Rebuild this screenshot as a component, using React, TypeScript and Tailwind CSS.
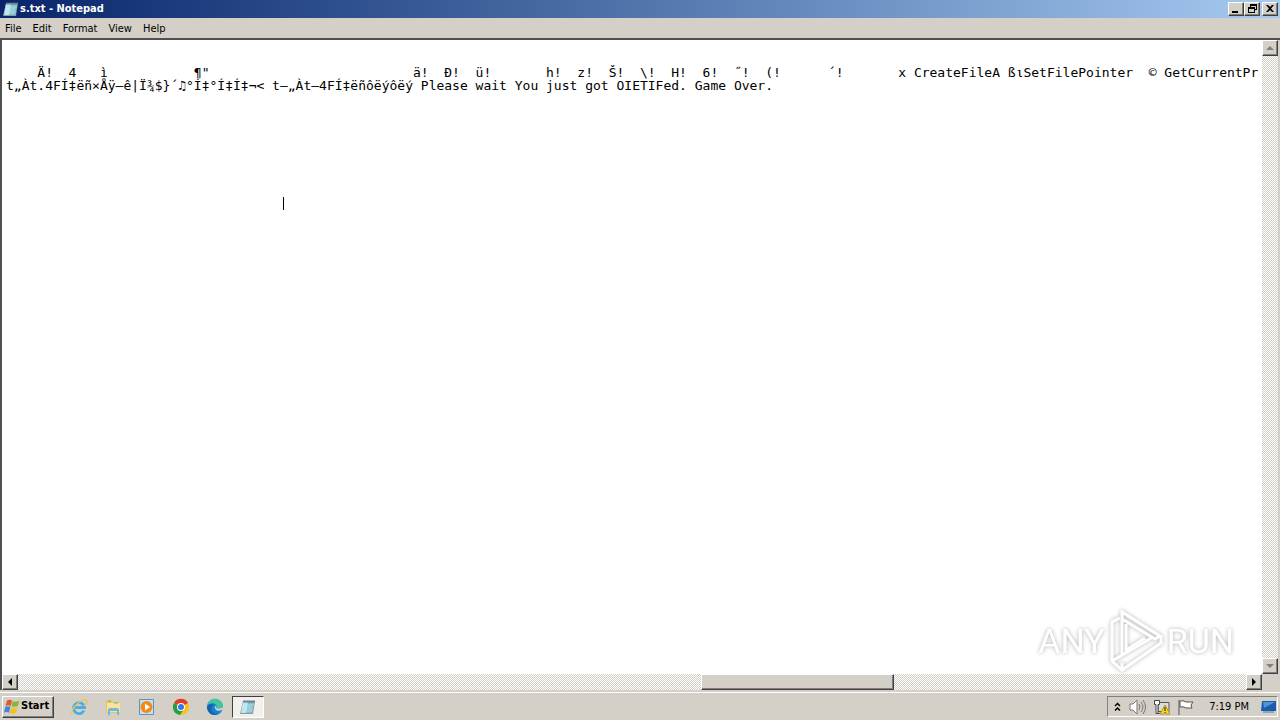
import type { ReactNode } from "react";

const raised =
  "border border-t-white border-l-white border-r-[#404040] border-b-[#404040] bg-[#d4d0c8] shadow-[inset_-1px_-1px_0_#808080]";

const menus = ["File", "Edit", "Format", "View", "Help"];

// [column, text] pairs, the gaps are filled with spaces
const firstLine: [number, string][] = [
  [4, "Ä!"],
  [8, "4"],
  [12, "ì"],
  [24, "¶\""],
  [52, "ä!"],
  [56, "Ð!"],
  [60, "ü!"],
  [69, "h!"],
  [73, "z!"],
  [77, "Š!"],
  [81, "\\!"],
  [85, "H!"],
  [89, "6!"],
  [93, "˝!"],
  [97, "(!"],
  [105, "´!"],
  [114, "x"],
  [116, "CreateFileA"],
  [128, "ßι"],
  [130, "SetFilePointer"],
  [146, "©"],
  [148, "GetCurrentPr"],
];

const secondLine: [number, string][] = [
  [0, "t„Àt.4FÍ‡ëñ×Åÿ–ê|Ï¾$}´♫°Í‡°Í‡Í‡¬< t–„Àt–4FÍ‡ëñôëýôëý"],
  [53, "Please wait You just got OIETIFed. Game Over."],
];

const buildLine = (parts: [number, string][]) =>
  parts.reduce((line, [col, text]) => line.padEnd(col) + text, "");

const content = "\n\n" + buildLine(firstLine) + "\n" + buildLine(secondLine);

const NotepadIcon = () => (
  <svg width="16" height="16" viewBox="0 0 16 16" aria-hidden="true">
    <path d="M3 2h12l-2 13H0z" fill="#8a9aa0" />
    <path d="M3 3h11l-2 11H1z" fill="#b9e4ee" />
    <path d="M8 3h6l-2 11H6z" fill="#7fc0d1" />
    <path d="M3 6h10M2 8h10M2 10h10M2 12h10" stroke="#d5f1f6" strokeWidth=".6" />
    <path d="M4 1v3M6 1v3M8 1v3M10 1v3M12 1v3M14 1v3" stroke="#4f6670" strokeWidth=".8" />
  </svg>
);

const WindowsLogo = () => (
  <svg width="16" height="16" viewBox="0 0 16 16" aria-hidden="true">
    <path d="M3 1.500q2.500-1.500 5 0L6.800 7q-2.500-1.500-5.300 0z" fill="#e8582a" />
    <path d="M8.700 2q3 1.500 6.800-.5l-1.500 5.500q-3 1.500-6.500.3z" fill="#84b93c" />
    <path d="M1.200 8q2.500-1.500 5.200 0L5 13.800q-2.500-1.500-5 0z" fill="#4087d6" />
    <path d="M7.200 8.300q3 1.500 6.500-.1l-1.500 5.600q-3 1.500-6.500.4z" fill="#f5c127" />
  </svg>
);

const IeIcon = () => (
  <svg width="18" height="18" viewBox="0 0 18 18" aria-hidden="true">
    <path d="M14 12.500A5.500 5.500 0 1 1 14.500 9.500H5" fill="none" stroke="#4bade5" strokeWidth="2.800" />
    <path d="M2.500 16C-1 13 10 1 16 2c2 1 0 4-2 6" fill="none" stroke="#e9c354" strokeWidth="1.300" />
  </svg>
);

const FolderIcon = () => (
  <svg width="18" height="18" viewBox="0 0 18 18" aria-hidden="true">
    <path d="M2 2h6l1 2h7v11H2z" fill="#e8c65d" />
    <path d="M3 5h13v9H3z" fill="#f8e49a" />
    <path d="M4 3h3M10 5h4" stroke="#65b88d" />
    <path d="M4 17v-5q0-2 2-2h7q2 0 2 2v5h-2v-4H6v4z" fill="#6dbbe0" />
  </svg>
);

const MediaIcon = () => (
  <svg width="18" height="18" viewBox="0 0 18 18" aria-hidden="true">
    <path d="M1.500 1.500h14v15h-14z" fill="#c7e0f2" stroke="#5795bd" />
    <circle cx="8.500" cy="9" r="6" fill="#f18a16" />
    <path d="M7 5.500l5 3.500-5 3.500z" fill="#fff" />
  </svg>
);

const ChromeIcon = () => (
  <svg width="18" height="18" viewBox="0 0 18 18" aria-hidden="true">
    <circle cx="9" cy="9" r="8" fill="#fbc116" />
    <path d="M9 9L2 5a8 8 0 0 1 14 0z" fill="#e33b2e" />
    <path d="M9 9L2 5a8 8 0 0 0 6 12l4-6z" fill="#269f4b" />
    <circle cx="9" cy="9" r="4" fill="#fff" />
    <circle cx="9" cy="9" r="3" fill="#3478e5" />
  </svg>
);

const EdgeIcon = () => (
  <svg width="18" height="18" viewBox="0 0 18 18" aria-hidden="true">
    <circle cx="9" cy="9" r="8" fill="#1683d2" />
    <path d="M1 8C2 2 7 0 11 1.200c4 1 6 4 6 7 0 3-5 4-7 2 2-3-1-5-4-5-2 0-4 1-5 2.800z" fill="#40c6a0" />
    <path d="M6 8c-2 4 1 8 6 8-5 3-11-1-11-7 1-3 5-4 7-2z" fill="#1265ad" />
    <path d="M9 8c-1 4 3 6 7 4l2 0-1-3c-2 2-5 2-7 1 1-1 0-2-1-2z" fill="#d4d0c8" />
  </svg>
);

const quickLaunch: { name: string; icon: ReactNode }[] = [
  { name: "Internet Explorer", icon: <IeIcon /> },
  { name: "Explorer", icon: <FolderIcon /> },
  { name: "Media Player", icon: <MediaIcon /> },
  { name: "Chrome", icon: <ChromeIcon /> },
  { name: "Edge", icon: <EdgeIcon /> },
];

const TitleBar = () => {
  const controls = [
    { name: "Minimize", d: "M2 8h6v2H2z" },
    { name: "Restore", d: "M4 1h7v6H9V6h1V3H5v1H4zM2 4h7v6H2zm1 2v3h5V6z" },
    { name: "Close", d: "M2 2h2l2 2 2-2h2L7 5.500 10 9H8L6 7 4 9H2l3-3.500z" },
  ];
  return (
    <header className="flex h-[18px] items-center bg-linear-to-r from-[#0a246a] to-[#a6caf0] pr-0.5 pl-[3px]">
      <NotepadIcon />
      <h1 className="ml-px flex-1 font-[DejaVu_Sans_Condensed,DejaVu_Sans,sans-serif] text-[11px] leading-4 font-bold text-white">
        s.txt - Notepad
      </h1>
      {controls.map((c) => (
        <button key={c.name} aria-label={c.name} className={`flex h-3.5 w-4 items-center justify-center last:ml-0.5 ${raised}`}>
          <svg width="12" height="12" viewBox="0 0 12 12" className="shrink-0">
            <path d={c.d} fillRule="evenodd" />
          </svg>
        </button>
      ))}
    </header>
  );
};

const ScrollButton = ({ name, d, disabled }: { name: string; d: string; disabled?: boolean }) => (
  <button aria-label={name} className={`flex size-4 shrink-0 items-center justify-center ${raised}`}>
    <svg width="8" height="8" viewBox="0 0 8 8" className="shrink-0">
      <path d={d} fill={disabled ? "#808080" : "#000"} />
    </svg>
  </button>
);

const track =
  "bg-[repeating-conic-gradient(#d4d0c8_0_25%,#ffffff_0_50%)] bg-size-[2px_2px]";

const Watermark = () => (
  <div className="pointer-events-none absolute right-7 bottom-0 flex items-center font-[Roboto,Liberation_Sans,sans-serif] text-[34px] leading-[66px] text-white [filter:drop-shadow(0_0_2px_#b0b0b0)]">
    <span>ANY</span>
    <svg width="62" height="66" viewBox="0 0 62 66" fill="none" stroke="#fff" strokeWidth="3">
      <path d="M17 4v7l33 20 5-3zM17 11v36M21 16v26l19-12" />
      <path d="M15 10l-8 4v39l10 9 39-27v-7M7 53l41-24M17 62v-7" />
    </svg>
    <span>RUN</span>
  </div>
);

const Tray = () => (
  <div className="flex h-[21px] items-center border border-t-[#808080] border-r-white border-b-white border-l-[#808080] pr-px pl-1.5">
    <button aria-label="Show hidden icons">
      <svg width="7" height="10" viewBox="0 0 7 10" fill="none" stroke="#000" strokeWidth="1.500">
        <path d="M1 4l2.500-2.500L6 4M1 8.500L3.500 6 6 8.500" />
      </svg>
    </button>
    <svg className="ml-2" width="18" height="16" viewBox="0 0 18 16" fill="none" stroke="#777">
      <path d="M1 5h3l4-4v14l-4-4H1z" fill="#fff" />
      <path d="M10 5q2 3 0 6M12 3q4 5 0 10M14 1q5 7 0 14" />
    </svg>
    <svg className="ml-1.5" width="18" height="16" viewBox="0 0 18 16">
      <path d="M5 3.500h11v9H5z" fill="#ddd" stroke="#555" />
      <path d="M5 14.500h8" stroke="#555" />
      <path d="M1.500 1.500h5v4h-1.500v9h-2v-9H1.500z" fill="#fff" stroke="#444" />
      <path d="M12 6l5 9H7z" fill="#f5d42a" stroke="#b6981b" />
      <path d="M12 8v4M12 13v1" stroke="#222" />
    </svg>
    <svg className="ml-1.5" width="18" height="16" viewBox="0 0 18 16" fill="#fff" stroke="#555">
      <path d="M2 1v15M3 2q3-1 6 1h7l-2 3 1 3H9q-3-2-6-1z" />
    </svg>
    <time className="ml-3.5 pt-0.5 text-[11px]">7:19 PM</time>
    <button aria-label="Show desktop" className="ml-3">
      <svg width="15" height="14" viewBox="0 0 15 14">
        <path d="M1 1h14v10H0z" fill="#195cae" />
        <path d="M2 2h12L3 8z" fill="#4f94d8" />
        <path d="M2 12h11" stroke="#8ba8bc" strokeWidth="2" />
      </svg>
    </button>
  </div>
);

const App = () => {
  return (
    <div className="flex h-screen flex-col overflow-hidden bg-[#d4d0c8] font-[DejaVu_Sans_Condensed,DejaVu_Sans,sans-serif] text-[11px] text-black">
      <TitleBar />
      <nav className="flex h-5 items-center gap-[11px] pt-1 pb-0.5 pl-[5px]">
        {menus.map((m) => (
          <button key={m}>{m}</button>
        ))}
      </nav>
      <main className="flex min-h-0 flex-1 flex-col border-t-2 border-l-2 border-[#505050] pr-0.5">
        <div className="flex min-h-0 flex-1">
          <div className="relative flex min-w-0 flex-1 bg-white">
            <textarea
              aria-label="Text"
              wrap="off"
              spellCheck={false}
              defaultValue={content}
              className="w-full resize-none overflow-hidden pl-1 font-[DejaVu_Sans_Mono,Liberation_Mono,monospace] text-[13px] leading-[13px] outline-none"
            />
            <span className="absolute top-[157px] left-[281px] h-[13px] w-px bg-black" />
            <Watermark />
          </div>
          <div className={`flex w-4 flex-col justify-between ${track}`}>
            <ScrollButton name="Scroll up" d="M4 2l4 4H0z" disabled />
            <ScrollButton name="Scroll down" d="M4 6l4-4H0z" disabled />
          </div>
        </div>
        <div className="flex h-4">
          <div className={`flex flex-1 ${track}`}>
            <ScrollButton name="Scroll left" d="M2 4l4-4v8z" />
            <div className="flex-[684]" />
            <div className={`flex-[191] ${raised}`} />
            <div className="flex-[352]" />
            <ScrollButton name="Scroll right" d="M6 4L2 0v8z" />
          </div>
          <div className="w-4" />
        </div>
      </main>
      <footer className="mt-0.5 flex h-7 items-center border-t border-white pr-0.5 pl-0.5">
        <button className={`flex h-[22px] w-[52px] items-center gap-px pl-px text-[11px] font-bold ${raised}`}>
          <WindowsLogo />
          Start
        </button>
        <div className="ml-4 flex gap-4">
          {quickLaunch.map((q) => (
            <button key={q.name} aria-label={q.name}>
              {q.icon}
            </button>
          ))}
        </div>
        <button
          aria-label="s.txt - Notepad"
          className="ml-2 flex h-[22px] w-8 items-center justify-center border border-t-[#404040] border-r-white border-b-white border-l-[#404040] bg-[#f2f0ed]"
        >
          <NotepadIcon />
        </button>
        <div className="flex-1" />
        <Tray />
      </footer>
    </div>
  );
};

export default App;
